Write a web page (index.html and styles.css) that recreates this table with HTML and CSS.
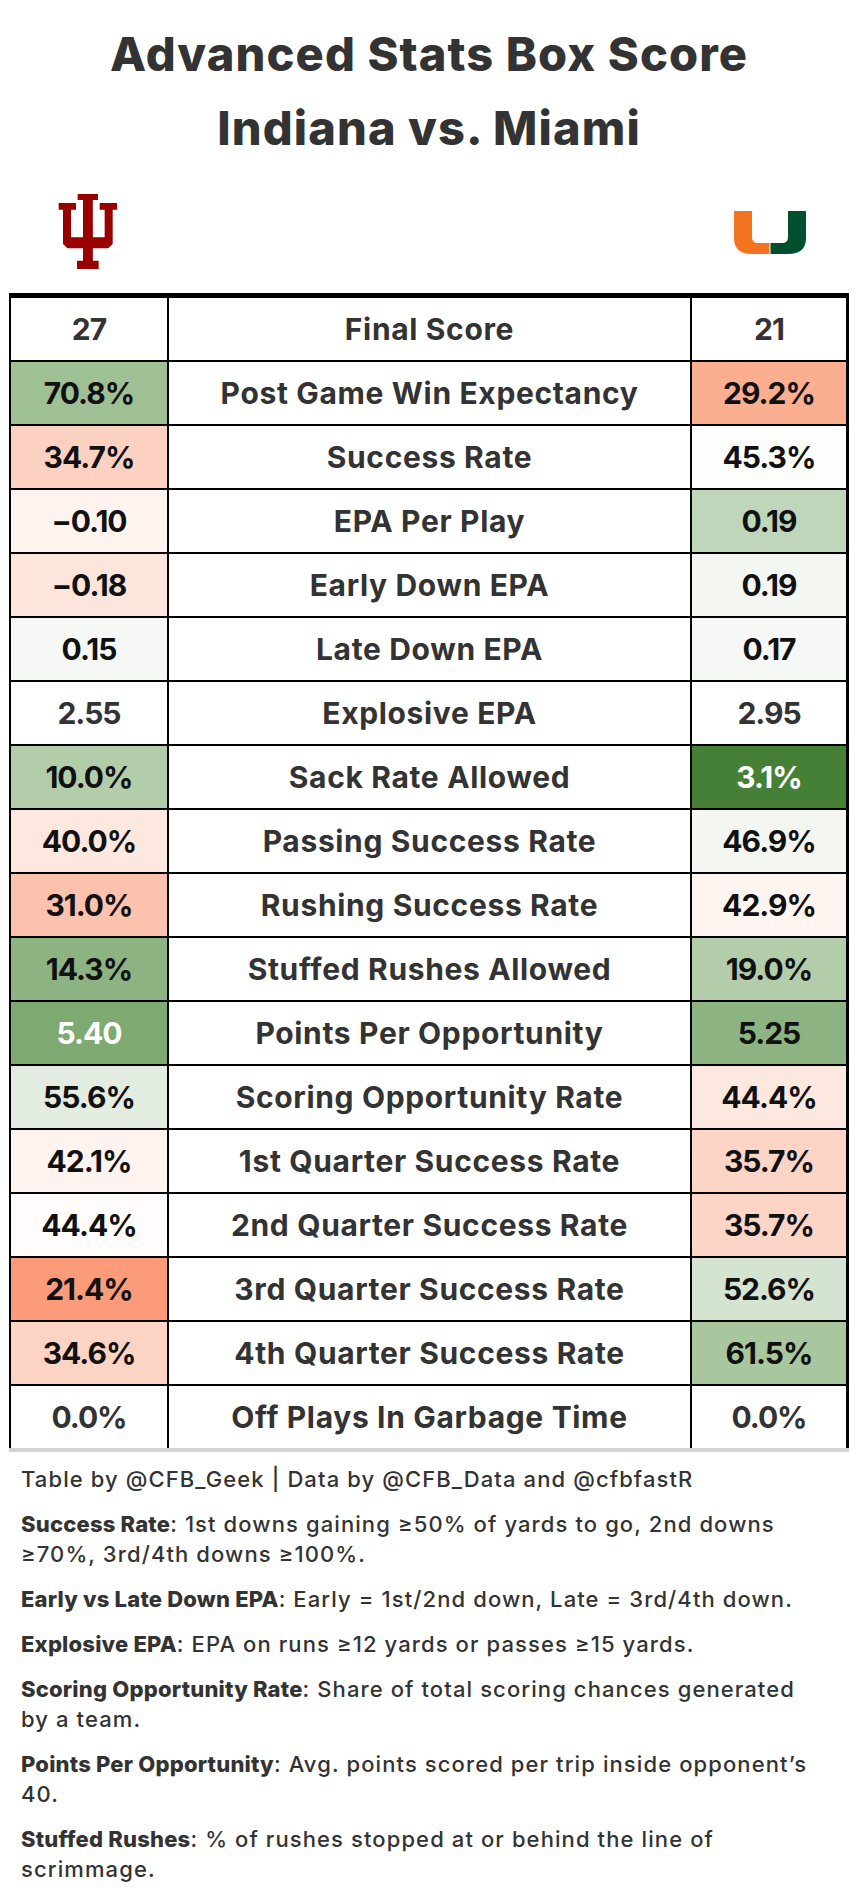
FILE: index.html
```html
<!DOCTYPE html>
<html lang="en">
<head>
<meta charset="utf-8">
<title>Advanced Stats Box Score</title>
<link rel="stylesheet" href="styles.css">
</head>
<body>
<div class="page">
  <header class="title">
    <div>Advanced Stats Box Score</div>
    <div>Indiana vs. Miami</div>
  </header>

  <div class="logos">
    <div class="logo-cell">
      <svg class="logo-iu" viewBox="0 0 180 228" width="60" height="76" aria-label="Indiana">
        <path fill="#990000" d="M59 0H120V18H104.5V130H140V47H125V27H177V47H164V150L151 163H104.5V200H122V225H57V200H75V163H28L15 150V47H2V27H54V47H39V130H75V18H59Z"/>
      </svg>
    </div>
    <div class="logo-cell"></div>
    <div class="logo-cell">
      <svg class="logo-um" viewBox="0 0 72 43" width="72" height="43" aria-label="Miami">
        <path fill="#f47321" d="M0 0H18V26Q18 32 24 32H35.5V43H18Q0 43 0 27Z"/>
        <path fill="#005030" d="M36.5 32H48Q54 32 54 26V0H72V27Q72 43 54 43H36.5Z"/>
      </svg>
    </div>
  </div>

  <table class="box">
    <tbody>
      <tr><td class="v">27</td><th>Final Score</th><td class="v">21</td></tr>
      <tr><td class="v c" style="background:#9fbf95">70.8%</td><th>Post Game Win Expectancy</th><td class="v c" style="background:#fcae91">29.2%</td></tr>
      <tr><td class="v c" style="background:#fdd1c1">34.7%</td><th>Success Rate</th><td class="v c" style="background:#fdfdfb">45.3%</td></tr>
      <tr><td class="v c" style="background:#fef3ee">&minus;0.10</td><th>EPA Per Play</th><td class="v c" style="background:#c0d6bb">0.19</td></tr>
      <tr><td class="v c" style="background:#fde5dc">&minus;0.18</td><th>Early Down EPA</th><td class="v c" style="background:#f3f6f1">0.19</td></tr>
      <tr><td class="v c" style="background:#f6f8f5">0.15</td><th>Late Down EPA</th><td class="v c" style="background:#f6f8f5">0.17</td></tr>
      <tr><td class="v">2.55</td><th>Explosive EPA</th><td class="v">2.95</td></tr>
      <tr><td class="v c" style="background:#b3cdaa">10.0%</td><th>Sack Rate Allowed</th><td class="v c w" style="background:#467f36">3.1%</td></tr>
      <tr><td class="v c" style="background:#fde8e0">40.0%</td><th>Passing Success Rate</th><td class="v c" style="background:#f3f6f1">46.9%</td></tr>
      <tr><td class="v c" style="background:#fcc2ad">31.0%</td><th>Rushing Success Rate</th><td class="v c" style="background:#fef5f1">42.9%</td></tr>
      <tr><td class="v c" style="background:#8db383">14.3%</td><th>Stuffed Rushes Allowed</th><td class="v c" style="background:#b3cdaa">19.0%</td></tr>
      <tr><td class="v c w" style="background:#7eaa72">5.40</td><th>Points Per Opportunity</th><td class="v c" style="background:#8db383">5.25</td></tr>
      <tr><td class="v c" style="background:#e2ece0">55.6%</td><th>Scoring Opportunity Rate</th><td class="v c" style="background:#fde8e0">44.4%</td></tr>
      <tr><td class="v c" style="background:#fef3ee">42.1%</td><th>1st Quarter Success Rate</th><td class="v c" style="background:#fdd5c6">35.7%</td></tr>
      <tr><td class="v c" style="background:#fffcfb">44.4%</td><th>2nd Quarter Success Rate</th><td class="v c" style="background:#fdd5c6">35.7%</td></tr>
      <tr><td class="v c" style="background:#fc9b7a">21.4%</td><th>3rd Quarter Success Rate</th><td class="v c" style="background:#d5e3d1">52.6%</td></tr>
      <tr><td class="v c" style="background:#fdd3c3">34.6%</td><th>4th Quarter Success Rate</th><td class="v c" style="background:#a9c79f">61.5%</td></tr>
      <tr><td class="v">0.0%</td><th>Off Plays In Garbage Time</th><td class="v">0.0%</td></tr>
    </tbody>
  </table>

  <footer class="notes">
    <p>Table by @CFB_Geek | Data by @CFB_Data and @cfbfastR</p>
    <p><b>Success Rate</b>: 1st downs gaining ≥50% of yards to go, 2nd downs<br>≥70%, 3rd/4th downs ≥100%.</p>
    <p><b>Early vs Late Down EPA</b>: Early = 1st/2nd down, Late = 3rd/4th down.</p>
    <p><b>Explosive EPA</b>: EPA on runs ≥12 yards or passes ≥15 yards.</p>
    <p><b>Scoring Opportunity Rate</b>: Share of total scoring chances generated<br>by a team.</p>
    <p><b>Points Per Opportunity</b>: Avg. points scored per trip inside opponent’s<br>40.</p>
    <p><b>Stuffed Rushes</b>: % of rushes stopped at or behind the line of<br>scrimmage.</p>
  </footer>
</div>
</body>
</html>
```

FILE: styles.css
```css
html, body {
  margin: 0;
  padding: 0;
  background: #ffffff;
}

body {
  font-family: Inter, "Noto Sans", "DejaVu Sans", sans-serif;
  color: #333333;
}

.page {
  width: 858px;
}

.title {
  padding-top: 17px;
  text-align: center;
  font-size: 47px;
  line-height: 74px;
  font-weight: 800;
  letter-spacing: 1.1px;
  color: #333333;
}

.logos {
  margin: 25px 9px 19px;
  display: grid;
  grid-template-columns: 158px 523px 159px;
  height: 84px;
  align-items: center;
}

.logo-cell {
  display: flex;
  justify-content: center;
  align-items: center;
}

.logo-iu, .logo-um {
  display: block;
}

.box {
  margin: 0 9px;
  width: 840px;
  border-collapse: separate;
  border-spacing: 0;
  border-top: 5px solid #000;
  border-left: 2px solid #000;
  table-layout: fixed;
}

.box td, .box th {
  height: 62px;
  padding: 0;
  text-align: center;
  vertical-align: middle;
  border-right: 2px solid #000;
  border-bottom: 2px solid #000;
  font-size: 30px;
  font-weight: 700;
  color: #333333;
}

.box td {
  letter-spacing: -1px;
}

.box th {
  font-weight: 700;
  letter-spacing: 0.65px;
}

.box td:first-child { width: 156px; }
.box td:last-child { width: 154px; border-right-width: 3px; }

.box .c { color: #111111; }
.box .w { color: #ffffff; }

.box tr:last-child td, .box tr:last-child th {
  border-bottom: none;
}

.notes {
  margin: 0 9px;
  border-top: 4px solid #d3d3d3;
  padding: 12px 12px 0;
  font-size: 22px;
  line-height: 30px;
  font-weight: 500;
  letter-spacing: 1.1px;
  color: #333333;
}

.notes p {
  margin: 0 0 15px;
}

.notes b {
  font-weight: 800;
  letter-spacing: 0.2px;
}
```
